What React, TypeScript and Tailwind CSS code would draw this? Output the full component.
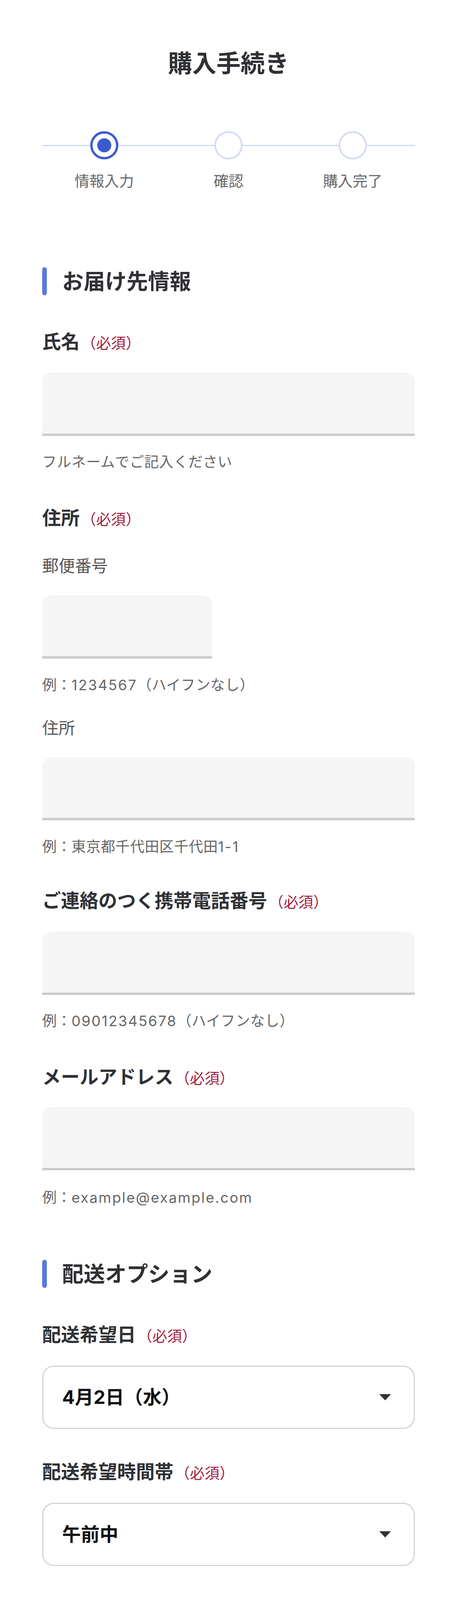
import React from "react";

function Req() {
  return (
    <span className="ml-[4px] text-[38px] font-normal text-[#a51c3c]">（必須）</span>
  );
}

function Label({ children, req = true, className = "" }: { children: React.ReactNode; req?: boolean; className?: string }) {
  return (
    <div className={"flex items-baseline h-[72px] leading-[72px] text-[48px] font-bold text-[#2f3135] " + className}>
      <span>{children}</span>
      {req && <Req />}
    </div>
  );
}

function SubLabel({ children, className = "" }: { children: React.ReactNode; className?: string }) {
  return <div className={"h-[63px] leading-[63px] text-[42px] text-[#555] " + className}>{children}</div>;
}

function Input({ className = "" }: { className?: string }) {
  return <div className={"h-[162px] rounded-t-[24px] border-b-[6px] border-[#cbcbcb] bg-[#f5f5f5] " + className} />;
}

function Helper({ children, className = "" }: { children: React.ReactNode; className?: string }) {
  return <p className={"h-[58px] leading-[58px] text-[37px] tracking-[0.5px] text-[#666] " + className}>{children}</p>;
}

function Latin({ children }: { children: React.ReactNode }) {
  return <span className="tracking-[2.5px]">{children}</span>;
}

function Section({ children, className = "" }: { children: React.ReactNode; className?: string }) {
  return (
    <div className={"flex items-center gap-[39px] h-[72px] " + className}>
      <span className="block w-[12px] h-[72px] rounded-full bg-[#5a78de]" />
      <h2 className="text-[55px] font-bold leading-[72px] text-[#2f3135]">{children}</h2>
    </div>
  );
}

function Select({ value, className = "" }: { value: string; className?: string }) {
  return (
    <div className={"flex items-center justify-between h-[162px] rounded-[30px] border-[3px] border-[#d4d4d4] bg-white pl-[48px] pr-[58px] " + className}>
      <span className="text-[48px] font-bold text-[#111]">{value}</span>
      <svg width="30" height="16" viewBox="0 0 30 16">
        <polygon points="0,0 30,0 15,16" fill="#333" />
      </svg>
    </div>
  );
}

function Option({ label, selected = false, className = "" }: { label: string; selected?: boolean; className?: string }) {
  return (
    <div
      className={
        selected
          ? "flex items-center gap-[36px] h-[180px] rounded-[30px] border-[6px] border-[#3b5bcc] bg-[#f0f5fe] pl-[36px] " + className
          : "flex items-center gap-[36px] h-[174px] rounded-[30px] border-[3px] border-[#d9d9d9] bg-white pl-[36px] " + className
      }
    >
      <span className="flex items-center justify-center w-[72px] h-[72px] rounded-full border-[6px] border-[#d2d4d8] bg-white">
        {selected && <span className="block w-[48px] h-[48px] rounded-full bg-[#3b5bcc]" />}
      </span>
      <span className="text-[48px] font-bold text-[#2f3135]">{label}</span>
    </div>
  );
}

function Stepper() {
  const steps = ["情報入力", "確認", "購入完了"];
  return (
    <div className="mt-[128px]">
      <div className="relative grid grid-cols-3 h-[72px]">
        <div className="absolute left-0 right-0 top-[35px] h-[3px] bg-[#d0d9f4]" />
        {steps.map((s, i) => (
          <div key={s} className="relative flex justify-center">
            {i === 0 ? (
              <span className="flex items-center justify-center w-[72px] h-[72px] rounded-full border-[6px] border-[#3b5bcc] bg-white">
                <span className="block w-[36px] h-[36px] rounded-full bg-[#3b5bcc]" />
              </span>
            ) : (
              <span className="block w-[72px] h-[72px] rounded-full border-[4px] border-[#d0d9f4] bg-white" />
            )}
          </div>
        ))}
      </div>
      <div className="mt-[26px] grid grid-cols-3">
        {steps.map((s) => (
          <div key={s} className="text-center h-[58px] leading-[58px] text-[38px] text-[#666]">
            {s}
          </div>
        ))}
      </div>
    </div>
  );
}

export default function App() {
  return (
    <div className="bg-white font-['Inter','Noto_Sans_CJK_JP',sans-serif]">
      <div className="px-[108px] pt-[118px] pb-[117px]">
        <h1 className="text-center text-[62px] font-bold leading-[90px] text-[#2f3135]">購入手続き</h1>
        <Stepper />

        <Section className="mt-[192px]">お届け先情報</Section>

        <Label className="mt-[83px]">氏名</Label>
        <Input className="mt-[43px]" />
        <Helper className="mt-[38px]">フルネームでご記入ください</Helper>

        <Label className="mt-[78px]">住所</Label>
        <SubLabel className="mt-[55px]">郵便番号</SubLabel>
        <Input className="mt-[44px] w-[435px]" />
        <Helper className="mt-[39px]">
          例：<Latin>1234567</Latin>（ハイフンなし）
        </Helper>
        <SubLabel className="mt-[49px]">住所</SubLabel>
        <Input className="mt-[43px]" />
        <Helper className="mt-[39px]">
          例：東京都千代田区千代田<Latin>1-1</Latin>
        </Helper>

        <Label className="mt-[73px]">ご連絡のつく携帯電話番号</Label>
        <Input className="mt-[43px]" />
        <Helper className="mt-[38px]">
          例：<Latin>09012345678</Latin>（ハイフンなし）
        </Helper>

        <Label className="mt-[78px]">メールアドレス</Label>
        <Input className="mt-[41px]" />
        <Helper className="mt-[41px]">
          例：<Latin>example@example.com</Latin>
        </Helper>

        <Section className="mt-[130px]">配送オプション</Section>

        <Label className="mt-[84px]">配送希望日</Label>
        <Select className="mt-[43px]" value="4月2日（水）" />

        <Label className="mt-[74px]">配送希望時間帯</Label>
        <Select className="mt-[43px]" value="午前中" />

        <Section className="mt-[132px]">お支払い方法</Section>

        <Option className="mt-[80px]" label="代引き" selected />
        <Option className="mt-[37px]" label="クレジットカード" />
        <Option className="mt-[36px]" label="PayPay" />

        <button className="mt-[119px] flex w-full h-[168px] items-center justify-center rounded-full bg-[#3b5bcc] text-[48px] font-bold text-white">
          確認画面へ進む
        </button>
      </div>
    </div>
  );
}
